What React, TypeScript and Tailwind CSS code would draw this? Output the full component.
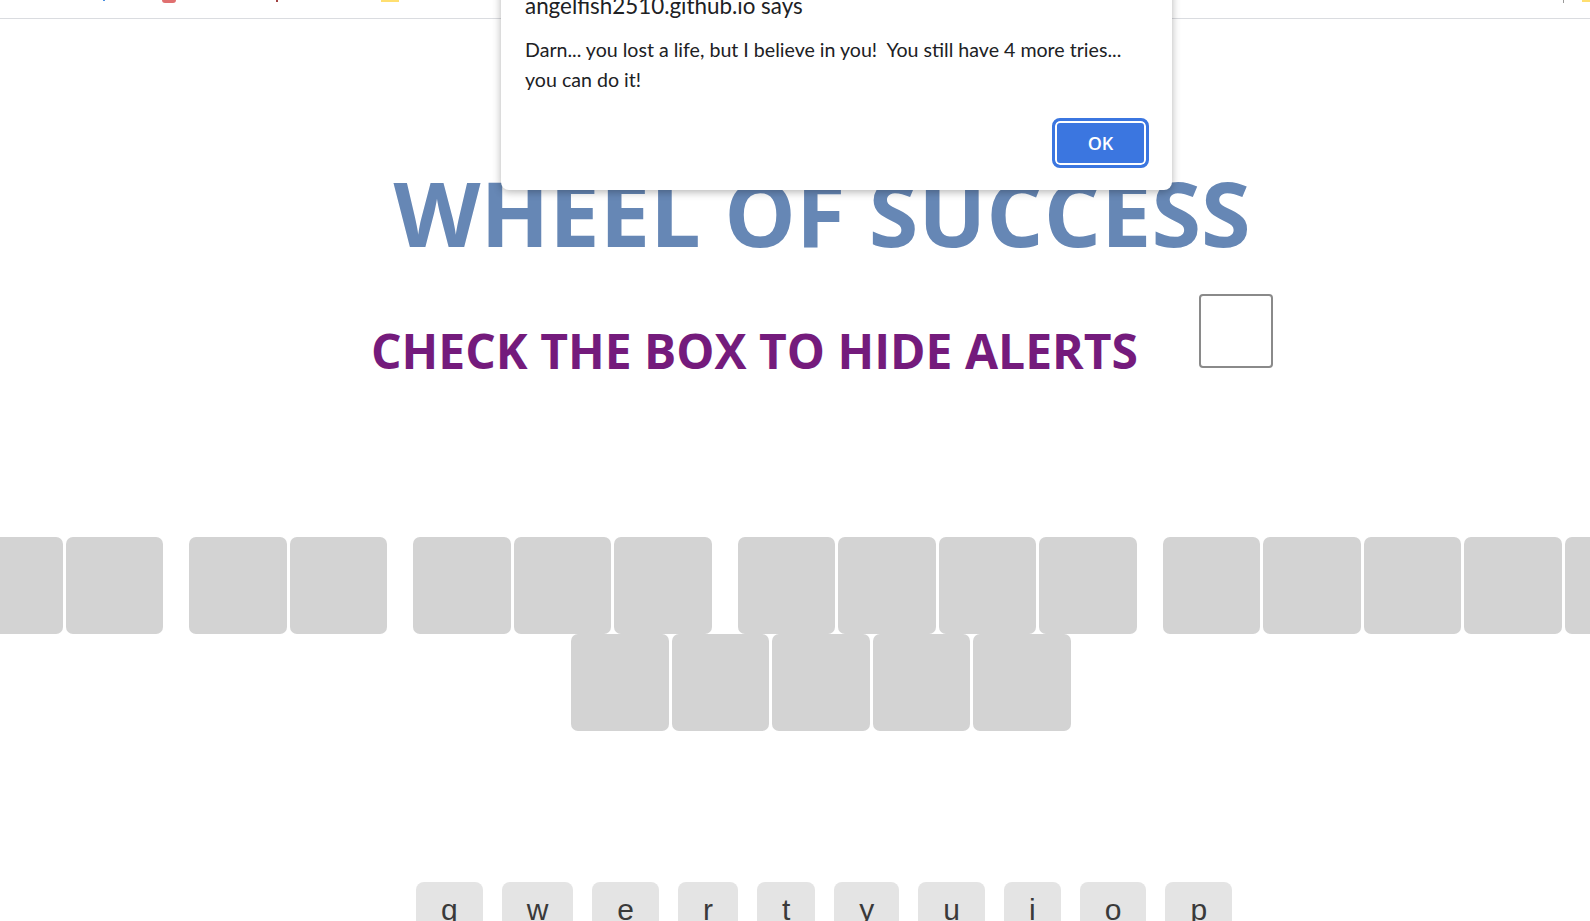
const words = [2, 2, 3, 4, 5];
const keys = ["q", "w", "e", "r", "t", "y", "u", "i", "o", "p"];

const Tile = () => (
  <div className="w-[97.5px] h-[97px] shrink-0 rounded-[7px] bg-[#d3d3d3]" />
);

const App = () => {
  return (
    <div className="relative h-[921px] w-full overflow-hidden bg-white">
      {/* cut-off bookmarks bar */}
      <div className="flex h-[19px] items-start border-b border-[#dadce0]">
        <span className="ml-[103px] h-[1px] w-[2px] bg-[#4a8fe0]" />
        <span className="ml-[57px] h-[3px] w-[14px] rounded-b-full bg-[#e07070]" />
        <span className="ml-[100px] h-[2px] w-[2px] bg-[#a04040]" />
        <span className="ml-[103px] h-[2px] w-[18px] bg-[#ffdf70]" />
        <span className="ml-auto h-[3px] w-[1px] bg-[#9a9a9a]" />
        <span className="ml-[18px] h-[2px] w-[8px] bg-[#ffdf70]" />
      </div>

      <div className="pl-[54px]">
        <h1 className="mt-[132px] text-center font-['Open_Sans',sans-serif] text-[90px] font-bold leading-[122px] text-[#6687b5]">
          WHEEL OF SUCCESS
        </h1>

        <div className="mt-[21px] flex items-end justify-center">
          <h2 className="font-['Open_Sans',sans-serif] text-[48px] font-bold leading-[65px] text-[#741b7c]">
            CHECK THE BOX TO HIDE ALERTS
          </h2>
          <input
            type="checkbox"
            className="mb-[15px] ml-[61px] h-[74px] w-[74px] appearance-none rounded-[4px] border-2 border-[#8a8a8a] bg-white"
          />
        </div>

        <div className="mt-[154px] flex justify-center gap-[26px] pr-[17px]">
          {words.map((n, i) => (
            <div key={i} className="flex shrink-0 gap-[3px]">
              {Array.from({ length: n }).map((_, j) => (
                <Tile key={j} />
              ))}
            </div>
          ))}
        </div>
        <div className="flex justify-center gap-[3px] pr-[2px]">
          {Array.from({ length: 5 }).map((_, j) => (
            <Tile key={j} />
          ))}
        </div>

        <div className="mt-[151px] ml-[4px] flex justify-center gap-[19px]">
          {keys.map((k) => (
            <button
              key={k}
              className="rounded-lg bg-[#e4e4e4] px-[25px] pt-[11px] pb-[14px] font-['Liberation_Sans',Arial,sans-serif] text-[30px] leading-[34px] text-[#3a3a3a]"
            >
              {k}
            </button>
          ))}
        </div>
      </div>

      {/* browser alert dialog */}
      <div className="absolute left-[501px] top-[-21px] w-[671px] rounded-lg bg-white pt-[13px] pr-[23px] pb-[22px] pl-[24px] font-['Lato',sans-serif] shadow-[0_2px_8px_rgba(0,0,0,0.3)]">
        <div className="text-[22.4px] leading-[28px] text-[#202124]">
          angelfish2510.github.io says
        </div>
        <p className="mt-[15px] whitespace-pre-wrap text-[19.6px] leading-[30px] text-[#202124]">
          {"Darn... you lost a life, but I believe in you!  You still have 4 more tries...\nyou can do it!"}
        </p>
        <div className="mt-[23px] flex justify-end">
          <button className="h-[50px] w-[97px] rounded-lg border-[3px] border-[#3b76e0] bg-[#3b76e0] font-['Open_Sans',sans-serif] text-[18px] font-semibold text-white shadow-[inset_0_0_0_2px_white]">
            OK
          </button>
        </div>
      </div>
    </div>
  );
};

export default App;
